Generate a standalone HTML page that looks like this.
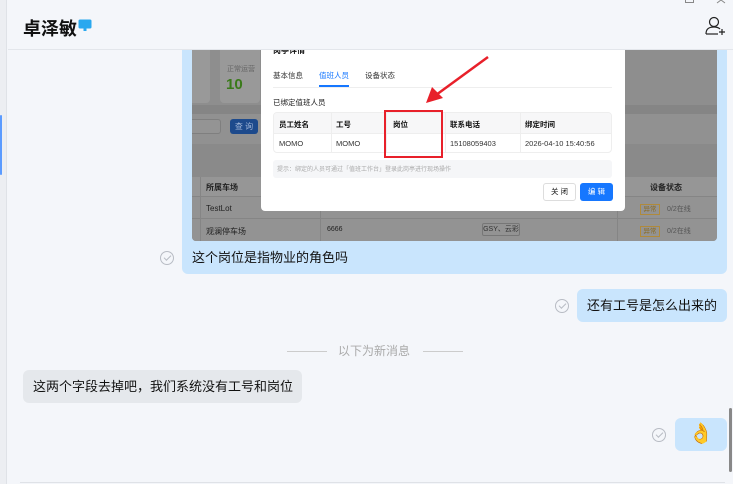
<!DOCTYPE html>
<html><head><meta charset="utf-8"><style>
*{margin:0;padding:0;box-sizing:border-box}
body{width:733px;height:484px;overflow:hidden;background:#f4f6fa;font-family:"Liberation Sans","Noto Sans CJK SC",sans-serif;position:relative;color:#111}
.a{position:absolute}
.t{position:absolute;white-space:nowrap}
.chk{position:absolute;width:14px;height:14px;border:1.2px solid #b8bcc4;border-radius:50%}
.chk:after{content:"";position:absolute;left:3px;top:3px;width:6px;height:3px;border-left:1.2px solid #b8bcc4;border-bottom:1.2px solid #b8bcc4;transform:rotate(-45deg)}
.bub{position:absolute;background:#c9e5fd;border-radius:6px;font-size:13px;line-height:33px;padding:0 10px;white-space:nowrap}
.sm{font-size:7.5px;position:absolute;white-space:nowrap}
</style></head><body>
<div class="a" style="left:0;top:0;width:7px;height:484px;background:#eceef2;border-right:1px solid #dfe2e7"></div>
<div class="a" style="left:0;top:115px;width:2px;height:60px;background:#5b9bff;border-radius:1px"></div>

<div class="a" style="left:182px;top:20px;width:545px;height:254px;background:#c9e5fd;border-radius:6px"></div>
<div class="a" style="left:192px;top:40px;width:525px;height:201px;background:#8e8e8e;border-radius:4px;overflow:hidden">
  <div class="a" style="left:0;top:0;width:18px;height:63px;background:#999;border-radius:0 4px 4px 0"></div>
  <div class="a" style="left:28px;top:0;width:40px;height:63px;background:#999;border-radius:4px"></div>
  <div class="t" style="left:35px;top:24px;font-size:7px;color:#666">正常运营</div>
  <div class="t" style="left:34px;top:36px;font-size:15px;font-weight:bold;color:#3a7a1a">10</div>
  <div class="a" style="left:0;top:65px;width:525px;height:9px;background:#858585"></div>
  <div class="a" style="left:0;top:74px;width:525px;height:30px;background:#919191"></div>
  <div class="a" style="left:-4px;top:79px;width:33px;height:15px;border:1px solid #7f7f7f;background:#949494;border-radius:3px"></div>
  <div class="a" style="left:38px;top:79px;width:28px;height:15px;background:#1d4a8c;border-radius:3px;color:#9fb4d6;font-size:8px;line-height:15px;text-align:center">查 询</div>
  <div class="a" style="left:0;top:104px;width:525px;height:33px;background:#8a8a8a"></div>
  <div class="a" style="left:0;top:137px;width:525px;height:20px;background:#969696;border-bottom:1px solid #858585"></div>
  <div class="a" style="left:0;top:157px;width:525px;height:22px;border-bottom:1px solid #858585;background:#939393"></div>
  <div class="a" style="left:0;top:179px;width:525px;height:22px;background:#939393"></div>
  <div class="a" style="left:8px;top:137px;width:1px;height:64px;background:#858585"></div>
  <div class="a" style="left:128px;top:137px;width:1px;height:64px;background:#858585"></div>
  <div class="a" style="left:425px;top:137px;width:1px;height:64px;background:#858585"></div>
  <div class="t" style="left:14px;top:142px;font-size:8px;font-weight:bold;color:#222">所属车场</div>
  <div class="t" style="left:14px;top:164px;font-size:8px;color:#222">TestLot</div>
  <div class="t" style="left:14px;top:186px;font-size:8px;color:#222">观澜停车场</div>
  <div class="t" style="left:135px;top:186px;font-size:7px;color:#222">6666</div>
  <div class="a" style="left:290px;top:183px;width:38px;height:13px;border:1px solid #777;border-radius:2px;font-size:7px;line-height:11px;text-align:center;color:#333">GSY、云彩</div>
  <div class="t" style="left:458px;top:142px;font-size:8px;font-weight:bold;color:#222">设备状态</div>
  <div class="a" style="left:448px;top:164px;width:20px;height:11px;border:1px solid #b08a3a;font-size:6.5px;line-height:9px;text-align:center;color:#8a6a20">异常</div>
  <div class="t" style="left:475px;top:164px;font-size:7px;color:#555">0/2在线</div>
  <div class="a" style="left:448px;top:186px;width:20px;height:11px;border:1px solid #b08a3a;font-size:6.5px;line-height:9px;text-align:center;color:#8a6a20">异常</div>
  <div class="t" style="left:475px;top:186px;font-size:7px;color:#555">0/2在线</div>
</div>
<div class="a" style="left:261px;top:30px;width:364px;height:181px;background:#fff;border-radius:4px">
  <div class="t" style="left:12px;top:15px;font-size:8px;font-weight:bold">岗亭详情</div>
  <div class="t" style="left:347px;top:13px;font-size:9px;color:#999">×</div>
  <div class="sm" style="left:12px;top:40px;color:#333">基本信息</div>
  <div class="sm" style="left:58px;top:40px;color:#1677ff">值班人员</div>
  <div class="a" style="left:58px;top:55px;width:30px;height:2px;background:#1677ff"></div>
  <div class="sm" style="left:104px;top:40px;color:#333">设备状态</div>
  <div class="a" style="left:12px;top:57px;width:339px;height:1px;background:#eee"></div>
  <div class="sm" style="left:12px;top:67px;color:#222">已绑定值班人员</div>
  <div class="a" style="left:12px;top:82px;width:339px;height:41px;border:1px solid #eee;border-radius:4px;overflow:hidden">
    <div class="a" style="left:0;top:0;width:339px;height:21px;background:#f7f7f8;border-bottom:1px solid #eee"></div>
    <div class="a" style="left:57px;top:0;width:1px;height:41px;background:#eee"></div>
    <div class="a" style="left:112px;top:0;width:1px;height:41px;background:#eee"></div>
    <div class="a" style="left:171px;top:0;width:1px;height:41px;background:#eee"></div>
    <div class="a" style="left:246px;top:0;width:1px;height:41px;background:#eee"></div>
    <div class="sm" style="left:5px;top:6px;font-weight:bold">员工姓名</div>
    <div class="sm" style="left:62px;top:6px;font-weight:bold">工号</div>
    <div class="sm" style="left:119px;top:6px;font-weight:bold">岗位</div>
    <div class="sm" style="left:176px;top:6px;font-weight:bold">联系电话</div>
    <div class="sm" style="left:251px;top:6px;font-weight:bold">绑定时间</div>
    <div class="sm" style="left:5px;top:26px;color:#333">MOMO</div>
    <div class="sm" style="left:62px;top:26px;color:#333">MOMO</div>
    <div class="sm" style="left:176px;top:26px;color:#333">15108059403</div>
    <div class="sm" style="left:251px;top:26px;color:#333">2026-04-10 15:40:56</div>
  </div>
  <div class="a" style="left:12px;top:130px;width:339px;height:18px;background:#f5f6f8;border-radius:3px"></div>
  <div class="t" style="left:16px;top:134px;font-size:6px;color:#aaa">提示：绑定的人员可通过「值班工作台」登录此岗亭进行现场操作</div>
  <div class="a" style="left:282px;top:153px;width:33px;height:18px;border:1px solid #ddd;border-radius:3px;font-size:7.5px;line-height:16px;text-align:center">关 闭</div>
  <div class="a" style="left:319px;top:153px;width:33px;height:18px;background:#1677ff;border-radius:3px;font-size:7.5px;line-height:18px;text-align:center;color:#fff">编 辑</div>
</div>
<div class="a" style="left:384px;top:110px;width:59px;height:48px;border:2px solid #e8202a"></div>
<svg class="a" style="left:0;top:0" width="733" height="484"><line x1="488" y1="57" x2="436" y2="95" stroke="#e8202a" stroke-width="2.5"/><polygon points="426,103 432,87 443,98" fill="#e8202a"/></svg>

<div class="a" style="left:8px;top:0;width:725px;height:50px;background:#f4f6fa;border-bottom:1px solid #e3e6eb"></div>
<div class="t" style="left:23px;top:15px;font-size:18px;font-weight:bold;color:#111">卓泽敏</div>
<svg class="a" style="left:78px;top:19px" width="14" height="13"><rect x="0.5" y="0.5" width="13" height="9" rx="1.5" fill="#29a8ef"/><rect x="5.5" y="9" width="3" height="3" fill="#29a8ef"/></svg>
<svg class="a" style="left:705px;top:16px" width="22" height="20" fill="none" stroke="#222" stroke-width="1.2"><circle cx="9" cy="6" r="4.5"/><path d="M1 18 C1 12 5 11 9 11 C12 11 14 12 15 13"/><path d="M1 18 H13"/><path d="M17 13 V19 M14 16 H20"/></svg>
<div class="a" style="left:685px;top:-4px;width:9px;height:7px;border:1px solid #888"></div>
<svg class="a" style="left:716px;top:0" width="10" height="4"><path d="M1 3 L5 0 L9 3" stroke="#888" fill="none"/></svg>

<div class="chk" style="left:160px;top:251px"></div>
<div class="t" style="left:192px;top:249px;font-size:13px;line-height:18px">这个岗位是指物业的角色吗</div>

<div class="bub" style="left:577px;top:289px;width:150px">还有工号是怎么出来的</div>
<div class="chk" style="left:555px;top:299px"></div>

<div class="a" style="left:287px;top:351px;width:40px;height:1px;background:#ccc"></div>
<div class="t" style="left:338px;top:343px;font-size:12px;line-height:16px;color:#aaa">以下为新消息</div>
<div class="a" style="left:423px;top:351px;width:40px;height:1px;background:#ccc"></div>

<div class="bub" style="left:23px;top:370px;width:279px;background:#e5e8ec">这两个字段去掉吧，我们系统没有工号和岗位</div>

<div class="bub" style="left:675px;top:418px;width:52px;text-align:center;font-size:20px;line-height:33px;padding:0">👌</div>
<div class="chk" style="left:652px;top:428px"></div>

<div class="a" style="left:729px;top:408px;width:3px;height:64px;background:#888;border-radius:2px"></div>
<div class="a" style="left:20px;top:482px;width:705px;height:1px;background:#dfe2e7"></div>
</body></html>
